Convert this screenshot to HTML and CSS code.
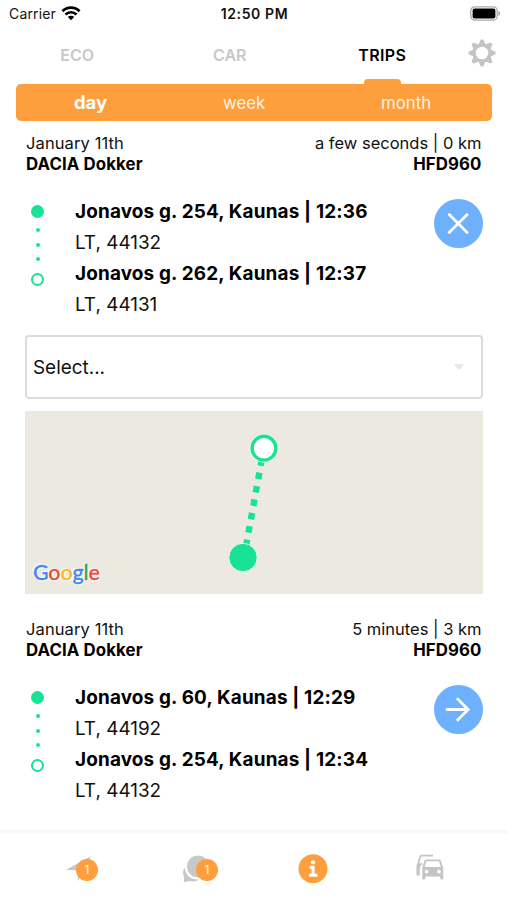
FILE: index.html
```html
<!DOCTYPE html>
<html lang="en">
<head>
    <meta charset="UTF-8">
    <title>Trips</title>
    <link rel="stylesheet" href="styles.css">
</head>
<body>
<div class="app">
    <div class="status">
        <div class="carrier">
            <span>Carrier</span>
            <svg width="20" height="16" viewBox="0 0 20 16" fill="none" stroke="#000" stroke-width="2.7">
                <path d="M1.4 6.2a12.3 12.3 0 0 1 17.2 0"/>
                <path d="M4.5 9.5a7.9 7.9 0 0 1 11 0"/>
                <path d="M10 15.2L6.8 12a4.6 4.6 0 0 1 6.4 0z" fill="#000" stroke="none"/>
            </svg>
        </div>
        <div class="time">12:50 PM</div>
        <svg class="battery" width="31" height="15" viewBox="0 0 31 15">
            <rect x=".8" y=".8" width="26.4" height="13.4" rx="4" fill="#fff" stroke="#aaa" stroke-width="1.3"/>
            <rect x="2.6" y="2.6" width="22.8" height="9.8" rx="2" fill="#000"/>
            <path d="M28.4 5c2.4.8 2.4 4.2 0 5z" fill="#aaa"/>
        </svg>
    </div>
    <div class="tabs">
        <div class="tab">ECO</div>
        <div class="tab">CAR</div>
        <div class="tab active">TRIPS</div>
        <svg class="gear" width="28" height="28" viewBox="-14 -14 28 28">
            <g fill="#c4c4c4">
                <path id="tooth" d="M-3.4-8.5L-1.3-13.5h2.6L3.4-8.5z"/>
                <use href="#tooth" transform="rotate(45)"/>
                <use href="#tooth" transform="rotate(90)"/>
                <use href="#tooth" transform="rotate(135)"/>
                <use href="#tooth" transform="rotate(180)"/>
                <use href="#tooth" transform="rotate(225)"/>
                <use href="#tooth" transform="rotate(270)"/>
                <use href="#tooth" transform="rotate(315)"/>
            </g>
            <circle r="8" fill="none" stroke="#c4c4c4" stroke-width="3.4"/>
        </svg>
    </div>
    <div class="period">
        <span class="selected">day</span>
        <span>week</span>
        <span>month</span>
    </div>

    <div class="trip">
        <div class="trip-head">
            <div>January 11th<br><b>DACIA Dokker</b></div>
            <div class="right">a few seconds | 0 km<br><b>HFD960</b></div>
        </div>
        <div class="route">
            <div class="points">
                <i class="start"></i><i class="dot"></i><i class="dot"></i><i class="dot"></i><i class="end"></i>
            </div>
            <div class="address">
                <div><b>Jonavos g. 254, Kaunas | 12:36</b></div>
                <div>LT, 44132</div>
                <div><b>Jonavos g. 262, Kaunas | 12:37</b></div>
                <div>LT, 44131</div>
            </div>
            <div class="btn">
                <svg width="49" height="49" viewBox="0 0 49 49" fill="none" stroke="#fff" stroke-width="2.8">
                    <path d="M14.5 14.8l19.4 19.4M33.9 14.8L14.5 34.2"/>
                </svg>
            </div>
        </div>
        <div class="select">
            <span>Select...</span>
            <svg width="10" height="6" viewBox="0 0 10 6"><path d="M0 0h10L6.5 5h-3z" fill="#e8e8e8"/></svg>
        </div>
        <div class="map">
            <svg class="path" width="458" height="183" viewBox="0 0 458 183">
                <path d="M238 42L219 146" stroke="#19e296" stroke-width="6.4" stroke-dasharray="6.6 7" stroke-dashoffset="-6.4"/>
                <circle cx="239" cy="37.2" r="14.4" fill="#f7fff9"/>
                <circle cx="239" cy="37.2" r="11.9" fill="#fff" stroke="#19e296" stroke-width="3.4"/>
                <circle cx="218" cy="146.5" r="14.2" fill="#19e296" stroke="#e8fcef" stroke-width="1"/>
            </svg>
            <div class="google"><span class="b">G</span><span class="r">o</span><span class="y">o</span><span class="b">g</span><span class="g">l</span><span class="r">e</span></div>
        </div>
    </div>

    <div class="trip second">
        <div class="trip-head">
            <div>January 11th<br><b>DACIA Dokker</b></div>
            <div class="right">5 minutes | 3 km<br><b>HFD960</b></div>
        </div>
        <div class="route">
            <div class="points">
                <i class="start"></i><i class="dot"></i><i class="dot"></i><i class="dot"></i><i class="end"></i>
            </div>
            <div class="address">
                <div><b>Jonavos g. 60, Kaunas | 12:29</b></div>
                <div>LT, 44192</div>
                <div><b>Jonavos g. 254, Kaunas | 12:34</b></div>
                <div>LT, 44132</div>
            </div>
            <div class="btn">
                <svg width="49" height="49" viewBox="0 0 49 49" fill="none" stroke="#fff" stroke-width="2.8">
                    <path d="M11.8 24.5h22.5M22.9 13.2l11.3 11.3-11.3 11.3"/>
                </svg>
            </div>
        </div>
    </div>

    <div class="bottom">
        <div class="item">
            <svg width="32" height="32" viewBox="0 0 32 32" fill="#c8c8c8">
                <path d="M3 16.8L27.5 3.5 24 25l-6-3-3.3 6.5V17.6z"/>
            </svg>
            <span class="badge">1</span>
        </div>
        <div class="item">
            <svg width="32" height="32" viewBox="0 0 32 32" fill="#c8c8c8">
                <path d="M4.7 14.5c-2.8 4-1.4 8-.6 9.3L3.8 29.3l5.4-1.4c4 1.2 7.5.2 9.6-1.4C10.5 27 5.5 22 4.7 14.5z"/>
                <circle cx="18" cy="13.5" r="11.5" stroke="#fff" stroke-width="1"/>
            </svg>
            <span class="badge chat">1</span>
        </div>
        <div class="item">
            <svg width="32" height="32" viewBox="0 0 32 32">
                <circle cx="16" cy="15.8" r="14.5" fill="#ff9e3d"/>
                <circle cx="16" cy="9.3" r="2.1" fill="#fff"/>
                <path d="M12.7 12.8h5v8h2.7v2.9h-8.2v-2.9h2.3v-5h-1.8z" fill="#fff"/>
            </svg>
        </div>
        <div class="item">
            <svg width="32" height="32" viewBox="0 0 32 32">
                <path d="M5.3 21.5H3.6V12.4L6.4 3.6Q6.8 2.7 7.8 2.7H19M4.5 11.2h4" fill="none" stroke="#c4c4c4" stroke-width="1.8"/>
                <path d="M2.7 11.5h4.5l-1.5 3.5v7H2.7z" fill="#c4c4c4"/>
                <path transform="translate(-.7 -1)" fill-rule="evenodd" fill="#c4c4c4" d="M12.8 7.4h13q1.3 0 1.7 1.2l2.5 7.4v10.6q0 1-1 1h-1q-1 0-1-1v-2H12v2q0 1-1 1h-1q-1 0-1-1V16l2.2-7.4q.4-1.2 1.6-1.2zM13 9.3L11.4 15h16.2l-1.9-5.7zM13.3 17.7a1.9 1.9 0 1 0 .01 0zM25.7 17.7a1.9 1.9 0 1 0 .01 0z"/>
            </svg>
        </div>
    </div>
</div>
</body>
</html>
```
FILE: styles.css
```css
body {
    margin: 0;
    background: #fff;
    color: #111;
    font-family: Inter, "Liberation Sans", sans-serif;
}
.app {
    width: 507px;
    height: 900px;
    display: flex;
    flex-direction: column;
    overflow: hidden;
}
svg {
    display: block;
    flex: none;
}
b {
    font-weight: 700;
    color: #000;
}
.status {
    height: 27px;
    display: grid;
    grid-template-columns: 1fr auto 1fr;
    align-items: center;
    padding: 0 6px 0 9px;
    font-size: 14px;
}
.carrier {
    display: flex;
    gap: 5px;
    letter-spacing: .15px;
}
.time {
    font-weight: 600;
    letter-spacing: .6px;
    margin-right: 1px;
}
.battery {
    justify-self: end;
}
.tabs {
    height: 57px;
    display: flex;
    padding-left: 1px;
}
.tab {
    width: 152.5px;
    display: flex;
    flex-direction: column;
    align-items: center;
    line-height: 56px;
    font-size: 16px;
    font-weight: 600;
    color: #c8c8c8;
}
.active {
    color: #000;
    letter-spacing: .4px;
}
.active::after {
    content: "";
    width: 37px;
    height: 6px;
    margin-top: -4px;
    flex: none;
    background: #ff9e3d;
    border-radius: 4px 4px 0 0;
}
.gear {
    margin: 12px 0 0 9px;
}
.period {
    height: 37px;
    margin: 0 15px 0 16px;
    padding-right: 3px;
    box-sizing: border-box;
    display: flex;
    justify-content: space-around;
    align-items: center;
    flex: none;
    background: #ff9e3d;
    border-radius: 5px;
    color: #fff4e4;
    font-size: 16.8px;
}
.period .selected {
    font-size: 18.5px;
    font-weight: 700;
    color: #fff;
    margin-top: -2px;
}
.trip {
    height: 486px;
    flex: none;
    padding: 12px 24.5px 0 25px;
    box-sizing: border-box;
}
.second {
    height: 210px;
}
.trip-head {
    height: 41px;
    display: flex;
    justify-content: space-between;
    font-size: 16.5px;
    line-height: 20.5px;
    letter-spacing: .1px;
    padding: 0 1px;
}
.trip-head b {
    font-size: 16.8px;
    letter-spacing: .12px;
}
.right {
    text-align: right;
    letter-spacing: 0;
}
.route {
    height: 124px;
    margin-top: 22px;
    display: flex;
}
.points {
    width: 25px;
    display: flex;
    flex-direction: column;
    align-items: center;
    padding-top: 8.5px;
}
.start, .end {
    width: 13px;
    height: 13px;
    box-sizing: border-box;
    border-radius: 50%;
    background: #19e296;
}
.end {
    margin-top: 11.5px;
    border: 2.5px solid #19e296;
    background: #fff;
}
.dot {
    width: 4px;
    height: 4px;
    margin-top: 10.6px;
    border-radius: 50%;
    background: #19e296;
}
.address {
    flex: 1;
    padding-left: 25px;
    font-size: 18.9px;
    line-height: 31px;
    white-space: nowrap;
}
.address b {
    letter-spacing: .17px;
}
.btn {
    width: 49px;
    height: 49px;
    margin-top: 3px;
    border-radius: 50%;
    background: #6db0fd;
}
.select {
    height: 64px;
    box-sizing: border-box;
    margin-top: 15px;
    padding: 0 17px 0 6px;
    display: flex;
    align-items: center;
    justify-content: space-between;
    border: 2px solid #dcdcdc;
    border-radius: 4px;
    font-size: 18.9px;
}
.map {
    height: 183px;
    margin-top: 12px;
    position: relative;
    background: #ebe9e0;
    overflow: hidden;
}
.google {
    position: absolute;
    left: 8px;
    bottom: 8px;
    font: 500 21.5px/28px Lato, sans-serif;
    letter-spacing: -.2px;
    -webkit-text-stroke: .3px;
    text-shadow: 0 0 2px #fff, 1px 1px 1px #fff, -1px -1px 1px #fff;
}
.b { color: #4286f0; }
.r { color: #e64b3e; }
.y { color: #f6bb19; }
.g { color: #36a655; }
.bottom {
    margin-top: auto;
    height: 71px;
    border-top: 4px solid #f9f9f9;
    padding: 20px 0 0 20px;
    box-sizing: border-box;
    display: flex;
}
.item {
    width: 117px;
    display: flex;
    justify-content: center;
    position: relative;
}
.badge {
    position: absolute;
    left: 56px;
    top: 6px;
    width: 22px;
    height: 22px;
    border-radius: 50%;
    background: #ff9e3d;
    color: #fff4e4;
    font-size: 12px;
    line-height: 22px;
    text-align: center;
}
.chat {
    left: 59px;
}
```
